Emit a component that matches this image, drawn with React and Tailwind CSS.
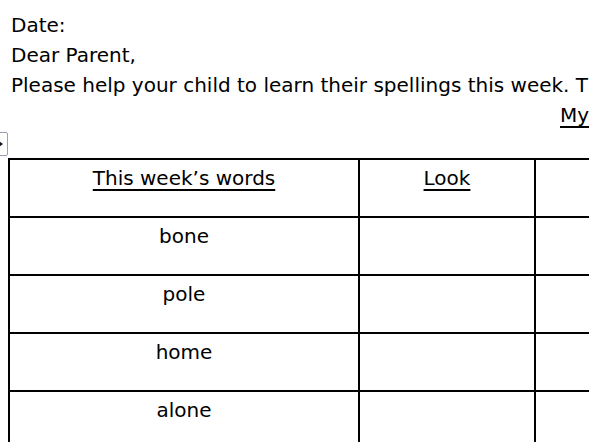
const words = ['bone', 'pole', 'home', 'alone', 'stone'];

const cols = ['w-[350px]', 'w-[176px]', 'w-[176px]'];

export default function App() {
  return (
    <div className="w-[589px] h-[442px] overflow-hidden bg-white text-black text-[20px] leading-[30px] font-['Comic_Sans_MS','DejaVu_Sans',sans-serif]">
      <div className="w-[900px] pt-[10px]">
        <p className="pl-[11px]">Date:</p>
        <p className="pl-[11px]">Dear Parent,</p>
        <p className="pl-[11px] whitespace-nowrap">
          Please help your child to learn their spellings this week. They will be tested on Friday.
        </p>
        <p className="pl-[560px] whitespace-nowrap">
          <span className="underline decoration-2 underline-offset-4">My spellings</span>
        </p>

        {/* spelling table */}
        <div className="relative ml-[8px] mt-[28px]">
          <div className="absolute -left-[18px] -top-[26px] w-[18px] h-[24px] border border-gray-400 rounded-[2px] bg-white flex items-center justify-end pr-[4px]">
            <span className="w-0 h-0 border-y-[3px] border-y-transparent border-l-[4px] border-l-gray-900" />
          </div>
          <div className="flex flex-col border-l-2 border-t-2 border-black w-max">
            <div className="flex">
              <div className={`${cols[0]} h-[58px] border-r-2 border-b-2 border-black text-center pt-[3px]`}>
                <span className="underline decoration-2 underline-offset-4">This week’s words</span>
              </div>
              <div className={`${cols[1]} h-[58px] border-r-2 border-b-2 border-black text-center pt-[3px]`}>
                <span className="underline decoration-2 underline-offset-4">Look</span>
              </div>
              <div className={`${cols[2]} h-[58px] border-r-2 border-b-2 border-black text-center pt-[3px]`}>
                <span className="underline decoration-2 underline-offset-4">Say</span>
              </div>
            </div>
            {words.map(w => (
              <div key={w} className="flex">
                <div className={`${cols[0]} h-[58px] border-r-2 border-b-2 border-black text-center pt-[3px]`}>{w}</div>
                <div className={`${cols[1]} h-[58px] border-r-2 border-b-2 border-black`} />
                <div className={`${cols[2]} h-[58px] border-r-2 border-b-2 border-black`} />
              </div>
            ))}
          </div>
        </div>
      </div>
    </div>
  );
}
